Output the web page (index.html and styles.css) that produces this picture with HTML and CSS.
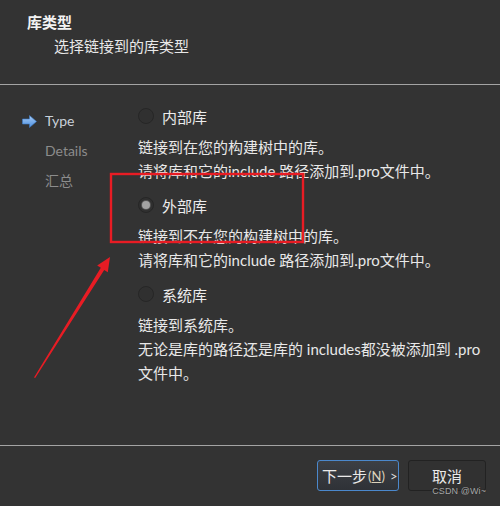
FILE: index.html
```html
<!DOCTYPE html>
<html lang="zh-CN">
<head>
<meta charset="utf-8">
<title>库类型</title>
<link rel="stylesheet" href="styles.css">
</head>
<body>
<div class="wizard">
  <header class="page-header">
    <div class="page-title">库类型</div>
    <div class="page-subtitle">选择链接到的库类型</div>
  </header>

  <main class="page-body">
    <nav class="steps">
      <div class="step current">
        <svg class="step-mark" width="15" height="13" viewBox="0 0 15 13">
          <defs>
            <linearGradient id="markFill" x1="0" y1="0" x2="0" y2="1">
              <stop offset="0" stop-color="#a9cdf6"/>
              <stop offset="1" stop-color="#4c8fe0"/>
            </linearGradient>
          </defs>
          <path d="M0.5 4 H7.5 V0.5 L14.5 6.5 L7.5 12.5 V9 H0.5 Z" fill="url(#markFill)" stroke="#3d7cc9" stroke-width="0.6"/>
        </svg>
        <span>Type</span>
      </div>
      <div class="step">Details</div>
      <div class="step">汇总</div>
    </nav>

    <section class="options">
      <label class="radio-row">
        <span class="radio"></span>
        <span>内部库</span>
      </label>
      <p class="desc">链接到在您的构建树中的库。<br>请将库和它的include 路径添加到.pro文件中。</p>

      <label class="radio-row">
        <span class="radio checked"></span>
        <span>外部库</span>
      </label>
      <p class="desc">链接到不在您的构建树中的库。<br>请将库和它的include 路径添加到.pro文件中。</p>

      <label class="radio-row">
        <span class="radio"></span>
        <span>系统库</span>
      </label>
      <p class="desc">链接到系统库。<br>无论是库的路径还是库的 includes都没被添加到 .pro<br>文件中。</p>
    </section>
  </main>

  <footer class="page-footer">
    <button class="btn primary">下一步<span class="mnemonic">(<u>N</u>)</span><span class="chev">&gt;</span></button>
    <button class="btn">取消</button>
  </footer>

  <!-- red annotation: box around the selected option and a pointer arrow -->
  <svg class="annotation" width="500" height="506" viewBox="0 0 500 506">
    <rect x="111" y="174" width="192" height="68" fill="none" stroke="#e81c24" stroke-width="2.4"/>
    <polygon points="34,377.5 100.8,267.7 97.2,265.4 110,257 107.8,272.3 104.2,269.9 35.2,378" fill="#e81c24"/>
  </svg>

  <div class="watermark">CSDN @Wi~</div>
</div>
</body>
</html>
```

FILE: styles.css
```css
html, body {
  margin: 0;
  padding: 0;
  background: #333333;
}

.wizard {
  position: relative;
  width: 500px;
  height: 506px;
  overflow: hidden;
  background: #333333;
  color: #e8e8e8;
  font-family: "Lato", "Noto Sans CJK SC", sans-serif;
  font-size: 15px;
}

/* header */
.page-header {
  height: 85px;
  box-sizing: border-box;
  padding: 13px 0 0 27px;
  border-bottom: 1px solid #a4a4a4;
}

.page-title {
  font-weight: bold;
  line-height: 18px;
  color: #f2f2f2;
}

.page-subtitle {
  margin: 6px 0 0 27px;
  line-height: 18px;
  color: #e8e8e8;
}

/* body */
.page-body {
  height: 360px;
  display: flex;
  border-bottom: 1px solid #a4a4a4;
}

.steps {
  width: 138px;
  flex: none;
  padding: 21px 0 0 22px;
  box-sizing: border-box;
}

.step {
  height: 30px;
  line-height: 30px;
  padding-left: 23px;
  color: #8c8c8c;
  font-size: 14px;
}

.step.current {
  display: flex;
  align-items: center;
  gap: 8px;
  padding-left: 0;
  color: #c9d1da;
}

.step-mark {
  flex: none;
}

.options {
  padding-top: 19px;
}

.radio-row {
  display: flex;
  align-items: center;
  gap: 8px;
  height: 24px;
  margin-bottom: 7px;
  color: #ececec;
}

.radio {
  width: 14px;
  height: 14px;
  border-radius: 50%;
  border: 1px solid #262626;
  background: #303030;
  display: flex;
  align-items: center;
  justify-content: center;
}

.radio.checked::after {
  content: "";
  width: 8px;
  height: 8px;
  border-radius: 50%;
  background: #a3a3a3;
  box-shadow: 0 0 0 1px #555555;
}

.desc {
  margin: 0 0 10px 0;
  line-height: 24px;
  color: #e8e8e8;
  white-space: nowrap;
}

/* footer */
.page-footer {
  display: flex;
  justify-content: flex-end;
  align-items: flex-start;
  gap: 9px;
  padding: 14px 14px 0 0;
}

.btn {
  height: 31px;
  box-sizing: border-box;
  border-radius: 3px;
  border: 1px solid #222222;
  background: #313131;
  color: #eaeaea;
  font-family: "Noto Sans CJK SC", sans-serif;
  font-size: 15px;
  padding: 0;
  width: 78px;
  display: flex;
  align-items: center;
  justify-content: center;
}

.btn.primary {
  width: 82px;
  border-color: #4b88cc;
  background: linear-gradient(#3c3f44, #2f3237);
  justify-content: flex-start;
  padding-left: 4px;
}

.mnemonic {
  font-family: "Lato", sans-serif;
  font-size: 13px;
  color: #dcd3bc;
  margin-left: 1px;
}

.chev {
  font-family: "Lato", sans-serif;
  font-size: 13px;
  margin-left: 5px;
  color: #dcdcdc;
}

/* overlays */
.annotation {
  position: absolute;
  left: 0;
  top: 0;
  pointer-events: none;
}

.watermark {
  position: absolute;
  right: 14px;
  bottom: 10px;
  font-family: "Liberation Sans", sans-serif;
  font-size: 9px;
  line-height: 9px;
  color: #a8a8a8;
  text-shadow: 0 0 1px #222222;
  letter-spacing: 0.1px;
}
```
